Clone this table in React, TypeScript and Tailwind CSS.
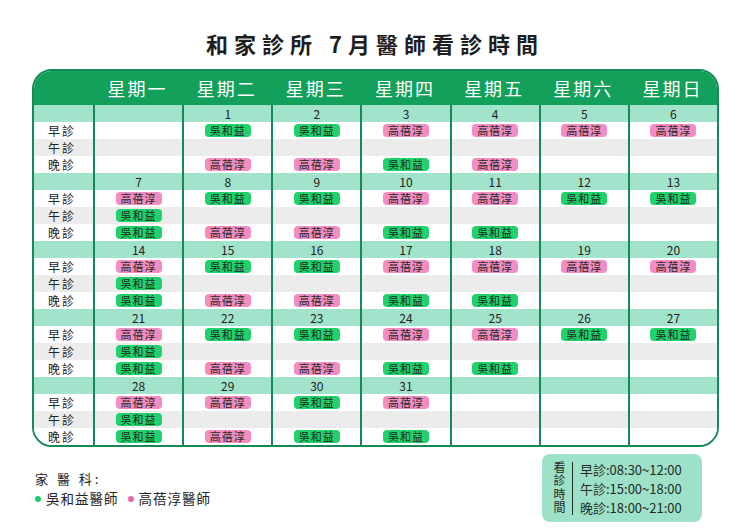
const font = "font-['Noto_Sans_CJK_TC','Noto_Sans',sans-serif]";

type Doc = 'w' | 'k' | '';

// each day: [date, early, afternoon, evening]
type Day = [string, Doc, Doc, Doc];

const weeks: Day[][] = [
  [
    ['', '', '', ''],
    ['1', 'w', '', 'k'],
    ['2', 'w', '', 'k'],
    ['3', 'k', '', 'w'],
    ['4', 'k', '', 'k'],
    ['5', 'k', '', ''],
    ['6', 'k', '', ''],
  ],
  [
    ['7', 'k', 'w', 'w'],
    ['8', 'w', '', 'k'],
    ['9', 'w', '', 'k'],
    ['10', 'k', '', 'w'],
    ['11', 'k', '', 'w'],
    ['12', 'w', '', ''],
    ['13', 'w', '', ''],
  ],
  [
    ['14', 'k', 'w', 'w'],
    ['15', 'w', '', 'k'],
    ['16', 'w', '', 'k'],
    ['17', 'k', '', 'w'],
    ['18', 'k', '', 'w'],
    ['19', 'k', '', ''],
    ['20', 'k', '', ''],
  ],
  [
    ['21', 'k', 'w', 'w'],
    ['22', 'w', '', 'k'],
    ['23', 'w', '', 'k'],
    ['24', 'k', '', 'w'],
    ['25', 'k', '', 'w'],
    ['26', 'w', '', ''],
    ['27', 'w', '', ''],
  ],
  [
    ['28', 'k', 'w', 'w'],
    ['29', 'k', '', 'k'],
    ['30', 'w', '', 'w'],
    ['31', 'k', '', 'w'],
    ['', '', '', ''],
    ['', '', '', ''],
    ['', '', '', ''],
  ],
];

const dayNames = ['星期一', '星期二', '星期三', '星期四', '星期五', '星期六', '星期日'];

const Badge = ({ doc }: { doc: Doc }) => {
  if (!doc) return null;
  return (
    <span
      className={`flex h-[13px] w-[46px] items-center justify-center rounded-[4px] text-[11px] leading-none tracking-[1px] text-[#1d2a22] ${
        doc === 'w' ? 'bg-[#20d16c]' : 'bg-[#f38cc3]'
      }`}
    >
      {doc === 'w' ? '吳和益' : '高蓓淳'}
    </span>
  );
};

const rowBg = ['bg-[#a2e3cb]', 'bg-white', 'bg-[#ececec]', 'bg-white'];

const App = () => {
  return (
    <div className={`h-[530px] w-[750px] bg-white ${font} text-[#222]`}>
      {/* Title */}
      <div className="flex h-[69px] items-center justify-center pt-[16px]">
        <h1 className="text-[22px] font-bold leading-none tracking-[6px] text-[#1e1e1e]">
          和家診所 7月醫師看診時間
        </h1>
      </div>

      {/* Calendar */}
      <div className="ml-[32px] w-[687px] overflow-hidden rounded-[20px] border-2 border-[#168a55]">
        <div className="grid h-[34px] grid-cols-[59px_repeat(7,1fr)] bg-[#12a05b]">
          <div />
          {dayNames.map((d) => (
            <div key={d} className="flex items-center justify-center text-[18px] leading-none tracking-[2px] text-white">
              {d}
            </div>
          ))}
        </div>

        <div className="grid grid-cols-[59px_repeat(7,1fr)]">
          {/* label column */}
          <div className="flex flex-col">
            {weeks.map((_, wi) => (
              <div key={wi} className="flex flex-col">
                {['', '早診', '午診', '晚診'].map((label, ri) => (
                  <div
                    key={ri}
                    className={`flex h-[17px] items-center pl-[14px] text-[12px] leading-none tracking-[2px] ${rowBg[ri]}`}
                  >
                    {label}
                  </div>
                ))}
              </div>
            ))}
          </div>

          {dayNames.map((_, di) => (
            <div key={di} className="flex flex-col border-l-2 border-[#168a55]">
              {weeks.map((week, wi) => {
                const [date, early, noon, night] = week[di];
                return (
                  <div key={wi} className="flex flex-col">
                    <div className={`flex h-[17px] items-center justify-center text-[12px] leading-none ${rowBg[0]}`}>
                      {date}
                    </div>
                    {[early, noon, night].map((doc, ri) => (
                      <div key={ri} className={`flex h-[17px] items-center justify-center ${rowBg[ri + 1]}`}>
                        <Badge doc={doc} />
                      </div>
                    ))}
                  </div>
                );
              })}
            </div>
          ))}
        </div>
      </div>

      {/* Footer */}
      <div className="mt-[7px] flex items-start justify-between pr-[48px]">
        <div className="ml-[35px] pt-[18px] text-[#222]">
          <p className="whitespace-pre text-[13px] leading-none tracking-[3px]">家 醫 科:</p>
          <div className="mt-[7px] flex items-center text-[13.5px] leading-none tracking-[1px]">
            <span className="mr-[5px] h-[6px] w-[6px] rounded-full bg-[#1ec870]" />
            <span>吳和益醫師</span>
            <span className="ml-[9px] mr-[5px] h-[6px] w-[6px] rounded-full bg-[#e566a8]" />
            <span>高蓓淳醫師</span>
          </div>
        </div>

        <div className="flex h-[68px] w-[160px] items-center rounded-[8px] bg-[#9ee1c9] pl-[11px] text-[#1f2a24]">
          <span className="w-[13px] text-[12px] leading-[13px] tracking-[1.5px] [writing-mode:vertical-rl]">看診時間</span>
          <div className="ml-[6px] h-[53px] w-px bg-[#1f2a24]" />
          <div className="ml-[7px] flex flex-col text-[13px] leading-[19px]">
            <span>早診:08:30~12:00</span>
            <span>午診:15:00~18:00</span>
            <span>晚診:18:00~21:00</span>
          </div>
        </div>
      </div>
    </div>
  );
};

export default App;
